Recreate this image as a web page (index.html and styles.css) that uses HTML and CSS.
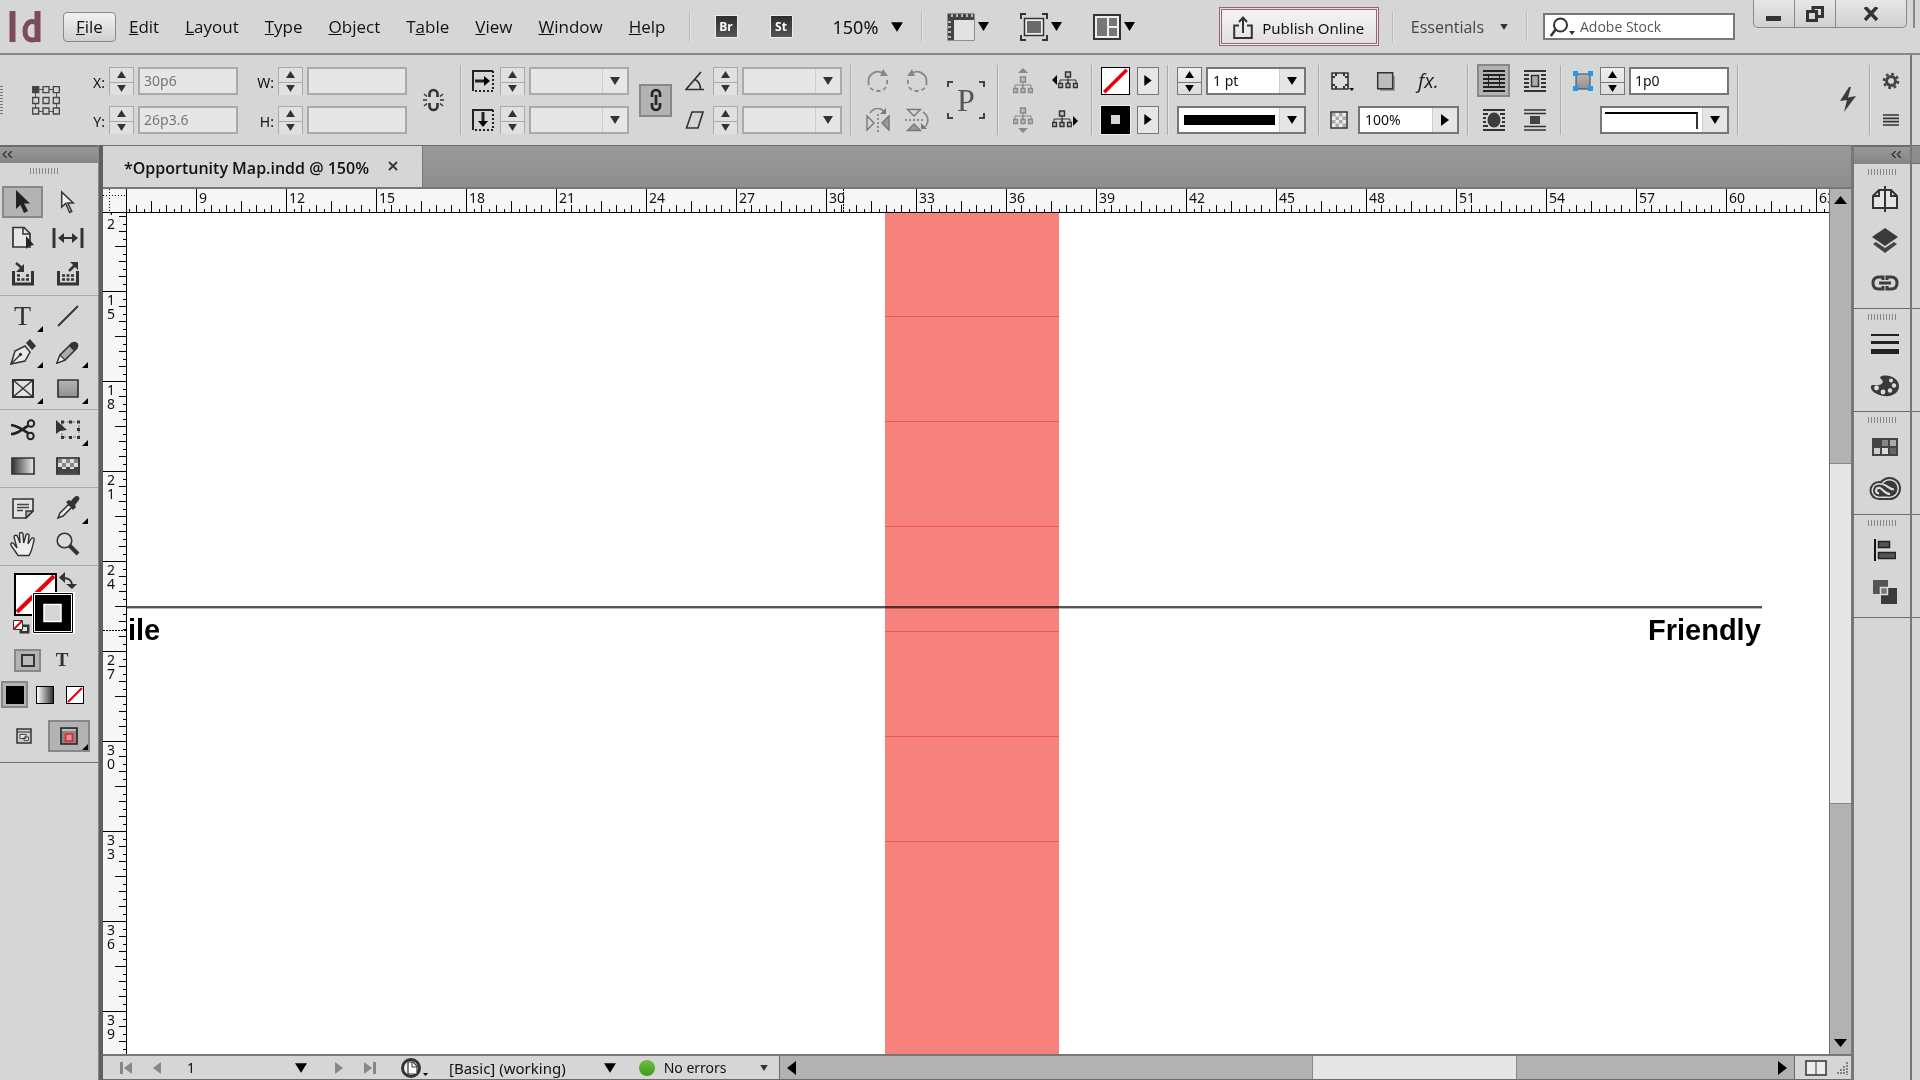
FILE: index.html
```html
<!DOCTYPE html>
<html lang="en">
<head>
<meta charset="utf-8">
<title>Opportunity Map.indd</title>
<link rel="stylesheet" href="styles.css">
</head>
<body>
<svg class="defs" aria-hidden="true">
  <defs>
    <linearGradient id="gray-ramp"><stop offset="0" stop-color="#333"/><stop offset="1" stop-color="#eee"/></linearGradient>
    <linearGradient id="soft" x2="0" y2="1"><stop offset="0" stop-color="#b5b5b5"/><stop offset="1" stop-color="#8f8f8f"/></linearGradient>
    <symbol id="up" viewBox="0 0 9 7"><path d="M4.500 0 9 7H0z"/></symbol>
    <symbol id="down" viewBox="0 0 10 8"><path d="M0 0h10L5 8z"/></symbol>
    <symbol id="right" viewBox="0 0 8 12"><path d="M0 0l8 6-8 6z"/></symbol>
    <symbol id="left" viewBox="0 0 8 12"><path d="M8 0v12L0 6z"/></symbol>
    <symbol id="flyout" viewBox="0 0 7 7"><path d="M7 0v7H0z"/></symbol>
    <symbol id="collapse" viewBox="0 0 12 8"><path d="M5 0 1 4l4 4M11 0 7 4l4 4" fill="none" stroke="#333" stroke-width="1.500"/></symbol>
    <symbol id="tree" viewBox="0 0 20 18"><path d="M10 5v7M2 13V9h16v4M10 9v4" fill="none" stroke="currentColor"/><path d="M7.500 1h5v5h-5zM.500 12.500h4v4h-4zM8 12.500h4v4H8zM15.500 12.500h4v4h-4z" fill="#bbb" stroke="currentColor" stroke-width="1.400"/></symbol>
    <symbol id="none" viewBox="0 0 30 30"><path d="M0 0h30v30H0z" fill="#fff"/><path d="M2 28 28 2" stroke="#e8000b" stroke-width="4"/></symbol>
  </defs>
</svg>
<div class="app">
  <header class="menubar">
    <svg class="logo" viewBox="0 0 34 32" role="img" aria-label="InDesign"><path d="M4.500 0v31M29.500 0v31" stroke="#7c4a5e" stroke-width="6"/><path d="M29 12c-2-1-3-1.500-5-1.500-4 0-7 4-7 9.500s2.500 9 7 9c2 0 3.500-.500 5-1" fill="none" stroke="#7c4a5e" stroke-width="5"/></svg>
    <nav class="menus">
      <button class="menu menu-open"><u>F</u>ile</button>
      <button class="menu"><u>E</u>dit</button>
      <button class="menu"><u>L</u>ayout</button>
      <button class="menu"><u>T</u>ype</button>
      <button class="menu"><u>O</u>bject</button>
      <button class="menu">T<u>a</u>ble</button>
      <button class="menu"><u>V</u>iew</button>
      <button class="menu"><u>W</u>indow</button>
      <button class="menu"><u>H</u>elp</button>
    </nav>
    <i class="bar-line"></i>
    <button class="app-tile">Br</button>
    <button class="app-tile">St</button>
    <button class="zoom-level">150% <svg class="caret-lg"><use href="#down"/></svg></button>
    <i class="bar-line"></i>
    <div class="view-options">
      <button class="view-option" aria-label="View options"><svg width="28" height="28" viewBox="0 0 28 28"><path d="M.500.500h27v27H.500z" fill="#444"/><path d="M7 7h20v20H7z" fill="#e2e2e2"/><path d="M5 1v3M10 1v3M15 1v3M20 1v3M25 1v3M1 9h3M1 14h3M1 19h3M1 24h3" stroke="#ddd" stroke-width="1.500"/></svg><svg class="caret"><use href="#down"/></svg></button>
      <button class="view-option" aria-label="Screen mode"><svg width="28" height="28" viewBox="0 0 28 28"><path d="M1 6V1h5M22 1h5v5M27 22v5h-5M6 27H1v-5" fill="none" stroke="#333" stroke-width="2"/><path d="M4.500 5.500h19v17h-19z" fill="#eee" stroke="#333" stroke-width="1.500"/><path d="M7 8h14v12H7z" fill="#6a6a6a"/></svg><svg class="caret"><use href="#down"/></svg></button>
      <button class="view-option" aria-label="Arrange documents"><svg width="28" height="28" viewBox="0 0 28 28"><path d="M1 2h26v24H1z" fill="#eee" stroke="#333" stroke-width="2"/><path d="M4 5h10v18H4zM16 5h8v8h-8zM16 15h8v8h-8z" fill="#777"/></svg><svg class="caret"><use href="#down"/></svg></button>
    </div>
    <span class="spacer"></span>
    <button class="publish"><svg width="20" height="24" viewBox="0 0 20 24"><path d="M6 9.500H1.200V22h17.600V9.500H14M10 17V2M6 6l4-4.500L14 6" fill="none" stroke="#333" stroke-width="2"/></svg>Publish Online</button>
    <i class="bar-line"></i>
    <button class="workspace-switch">Essentials <svg class="caret-sm"><use href="#down"/></svg></button>
    <i class="bar-line"></i>
    <label class="search"><svg width="26" height="20" viewBox="0 0 26 20"><circle cx="10.500" cy="8" r="6.500" fill="none" stroke="#333" stroke-width="2"/><path d="M6 12 .800 19" stroke="#333" stroke-width="2.500"/><path d="M19 14h6l-3 4z" fill="#333"/></svg><input type="search" placeholder="Adobe Stock" aria-label="Search Adobe Stock"></label>
    <div class="window-buttons">
      <button aria-label="Minimize"><svg width="16" height="16"><path d="M0 10h15v5H0z" fill="#333"/></svg></button>
      <button aria-label="Restore"><svg width="18" height="16" viewBox="0 0 18 16"><path d="M7 5V1.500h9.500v9H12M1.500 5.500h9v9h-9z" fill="none" stroke="#333" stroke-width="3"/></svg></button>
      <button class="close" aria-label="Close"><svg width="16" height="14" viewBox="0 0 16 14"><path d="M2 0l12 13M14 0 2 13" stroke="#333" stroke-width="3.500"/></svg></button>
    </div>
    <i class="window-edge"></i>
  </header>

  <div class="below-menu">
    <div class="frame">
      <section class="control-bar" aria-label="Control">
        <i class="side-grip"></i>
        <svg class="ref-point" width="28" height="29" viewBox="0 0 28 29"><path d="M3.500 3.500h21v22h-21z" fill="none" stroke="#555"/><g fill="#d6d6d6" stroke="#444" stroke-width="1.300"><path d="M.700.700h6v6h-6z" fill="#444"/><path d="M11 .700h6v6h-6zM21.300.700h6v6h-6zM.700 11.500h6v6h-6zM11 11.500h6v6h-6zM21.300 11.500h6v6h-6zM.700 22h6v6h-6zM11 22h6v6h-6zM21.300 22h6v6h-6z"/></g></svg>

        <div class="fields fields-x">
          <label for="x">X:</label>
          <span class="spin dim"><button><svg><use href="#up"/></svg></button><button><svg><use href="#down"/></svg></button></span>
          <input class="field dim" id="x" value="30p6">
          <label for="y">Y:</label>
          <span class="spin dim"><button><svg><use href="#up"/></svg></button><button><svg><use href="#down"/></svg></button></span>
          <input class="field dim" id="y" value="26p3.6">
        </div>
        <div class="fields fields-w">
          <label for="w">W:</label>
          <span class="spin dim"><button><svg><use href="#up"/></svg></button><button><svg><use href="#down"/></svg></button></span>
          <input class="field dim" id="w">
          <label for="h">H:</label>
          <span class="spin dim"><button><svg><use href="#up"/></svg></button><button><svg><use href="#down"/></svg></button></span>
          <input class="field dim" id="h">
        </div>
        <svg class="unlinked" width="21" height="24" viewBox="0 0 21 24"><path d="M6.500 9V6a4 4 0 0 1 8 0v3M6.500 15v3a4 4 0 0 0 8 0v-3" fill="none" stroke="#333" stroke-width="2.600"/><path d="M0 12h4M17 12h4M1 6l3 2.500M20 6l-3 2.500M1 18l3-2.500M20 18l-3-2.500" stroke="#333" stroke-width="1.500"/></svg>
        <i class="sep sep-wide"></i>

        <div class="fields fields-icon">
          <svg width="22" height="22" viewBox="0 0 22 22"><path d="M1 21V1h20" fill="none" stroke="#222" stroke-width="2"/><path d="M21 1v20H1" fill="none" stroke="#222" stroke-width="2" stroke-dasharray="2 2"/><path d="M3 11h10" stroke="#222" stroke-width="3"/><path d="M12 6l6 5-6 5z"/></svg>
          <span class="spin dim"><button><svg><use href="#up"/></svg></button><button><svg><use href="#down"/></svg></button></span>
          <span class="combo dim"><select aria-label="Scale X"><option></option></select><svg class="drop"><use href="#down"/></svg></span>
          <svg width="22" height="22" viewBox="0 0 22 22"><path d="M1 21V1h20" fill="none" stroke="#222" stroke-width="2"/><path d="M21 1v20H1" fill="none" stroke="#222" stroke-width="2" stroke-dasharray="2 2"/><path d="M11 3v10" stroke="#222" stroke-width="3"/><path d="M6 12l5 6 5-6z"/></svg>
          <span class="spin dim"><button><svg><use href="#up"/></svg></button><button><svg><use href="#down"/></svg></button></span>
          <span class="combo dim"><select aria-label="Scale Y"><option></option></select><svg class="drop"><use href="#down"/></svg></span>
        </div>
        <button class="pressed link-scale" aria-label="Constrain scaling"><svg width="12" height="24" viewBox="0 0 12 24"><path d="M2 9V6a4 4 0 0 1 8 0v3M2 15v3a4 4 0 0 0 8 0v-3M6 7v10" fill="none" stroke="#222" stroke-width="2.700"/></svg></button>
        <div class="fields fields-icon">
          <svg width="20" height="20" viewBox="0 0 20 20"><path d="M16 1 1 18.500h18M10 8.500c4 2 5.500 5.500 5.500 10" fill="none" stroke="#333" stroke-width="1.700"/></svg>
          <span class="spin dim"><button><svg><use href="#up"/></svg></button><button><svg><use href="#down"/></svg></button></span>
          <span class="combo dim"><select aria-label="Rotation"><option></option></select><svg class="drop"><use href="#down"/></svg></span>
          <svg width="20" height="18" viewBox="0 0 20 18"><path d="M7 1h11l-5 16H1.500z" fill="none" stroke="#333" stroke-width="1.600"/></svg>
          <span class="spin dim"><button><svg><use href="#up"/></svg></button><button><svg><use href="#down"/></svg></button></span>
          <span class="combo dim"><select aria-label="Shear"><option></option></select><svg class="drop"><use href="#down"/></svg></span>
        </div>
        <i class="sep"></i>

        <div class="icon-grid transforms">
          <svg width="22" height="24" viewBox="0 0 22 24"><path d="M1.500 13A9.500 9.500 0 0 1 17 5" fill="none" stroke="#888" stroke-width="1.800"/><path d="M16 0l5 7h-8z" fill="#888"/><path d="M20 11c1 7-3 11-9 11S1 18 1.500 13" fill="none" stroke="#888" stroke-width="1.800" stroke-dasharray="4 3"/></svg>
          <svg width="22" height="24" viewBox="0 0 22 24"><path d="M20.500 13A9.500 9.500 0 0 0 5 5" fill="none" stroke="#888" stroke-width="1.800"/><path d="M6 0 1 7h8z" fill="#888"/><path d="M2 11c-1 7 3 11 9 11s10-4 9.500-9" fill="none" stroke="#888" stroke-width="1.800" stroke-dasharray="4 3"/></svg>
          <svg width="24" height="24" viewBox="0 0 24 24"><path d="M12 6v18" stroke="#777" stroke-width="1.500" stroke-dasharray="2 2"/><path d="M1 8v14l7-7z" fill="none" stroke="#777" stroke-width="1.400"/><path d="M23 8v14l-7-7z" fill="#999" stroke="#777" stroke-width="1.400"/><path d="M4 5c4-6 11-6 14-1" fill="none" stroke="#888" stroke-width="1.700"/><path d="M20 0v6h-6z" fill="#777"/></svg>
          <svg width="24" height="24" viewBox="0 0 24 24"><path d="M0 12h18" stroke="#777" stroke-width="1.500" stroke-dasharray="2 2"/><path d="M2.500 1.500h13L9 8z" fill="none" stroke="#777" stroke-width="1.400"/><path d="M2.500 22.500h13L9 16z" fill="#999" stroke="#777" stroke-width="1.400"/><path d="M18 4c6 4 6 11 2 15" fill="none" stroke="#888" stroke-width="1.700"/><path d="M16 15v6h6z" fill="#777"/></svg>
        </div>
        <span class="glyph-p">P</span>
        <i class="sep sep-mid"></i>

        <div class="icon-grid selectors">
          <svg class="faded" width="22" height="26" viewBox="0 0 22 26"><path d="M11 0l5 5H6z" fill="currentColor"/><use href="#tree" x="1" y="8" width="20" height="18"/></svg>
          <svg width="28" height="20" viewBox="0 0 28 20"><path d="M6 4v10L1 9z"/><use href="#tree" x="7" y="0" width="20" height="18"/></svg>
          <svg class="faded" width="22" height="26" viewBox="0 0 22 26"><path d="M11 26l5-5H6z" fill="currentColor"/><use href="#tree" x="1" y="0" width="20" height="18"/></svg>
          <svg width="28" height="20" viewBox="0 0 28 20"><path d="M22 6v10l5-5z"/><use href="#tree" x="1" y="0" width="20" height="18"/></svg>
        </div>
        <i class="sep sep-mid"></i>

        <div class="swatches">
          <button class="swatch" aria-label="Fill"><svg><use href="#none"/></svg></button>
          <button class="arrow-button" aria-label="Fill options"><svg><use href="#right"/></svg></button>
          <button class="swatch swatch-stroke" aria-label="Stroke"><i></i></button>
          <button class="arrow-button" aria-label="Stroke options"><svg><use href="#right"/></svg></button>
        </div>
        <i class="sep"></i>

        <div class="fields stroke-fields">
          <span class="spin"><button><svg><use href="#up"/></svg></button><button><svg><use href="#down"/></svg></button></span>
          <span class="combo"><select aria-label="Stroke weight"><option>1 pt</option></select><svg class="drop"><use href="#down"/></svg></span>
          <button class="combo wide" aria-label="Stroke type"><i class="stroke-solid"></i><svg class="drop"><use href="#down"/></svg></button>
        </div>
        <i class="sep sep-mid"></i>

        <div class="effects">
          <div class="effects-row icons">
            <svg width="24" height="24" viewBox="0 0 24 24"><path d="M2 4h16v16H2z" fill="#dedede" stroke="#333" stroke-width="1.600"/><path d="M6 4v3M14 4v3M6 20v-3M14 20v-3M2 8h3M2 16h3M18 8h-3M18 16h-3" stroke="#333" stroke-width="2"/><path d="M19 19h5l-2 3z"/></svg>
            <svg width="24" height="24" viewBox="0 0 24 24"><path d="M6 7h15v15H6z" fill="#9a9a9a"/><path d="M3.700 3.700h15v16h-15z" fill="#bdbdbd" stroke="#333" stroke-width="1.500"/></svg>
            <span class="fx">fx.</span>
          </div>
          <div class="effects-row">
            <svg width="18" height="18" viewBox="0 0 18 18"><path d="M1 1h16v16H1z" fill="#eee" stroke="#333" stroke-width="1.500"/><path d="M2 2h3.500v3.500H2zM9 2h3.500v3.500H9zM5.500 5.500H9V9H5.500zM12.500 5.500H16V9h-3.500zM2 9h3.500v3.500H2zM9 9h3.500v3.500H9zM5.500 12.500H9V16H5.500zM12.500 12.500H16V16h-3.500z" fill="#aaa"/></svg>
            <span class="combo"><input value="100%" aria-label="Opacity"><svg class="drop drop-right"><use href="#right"/></svg></span>
          </div>
        </div>
        <i class="sep"></i>

        <div class="wraps">
          <button class="pressed" aria-label="No text wrap"><svg width="22" height="22" viewBox="0 0 22 22"><path d="M0 1h22M0 5h22M0 9h22M0 13h22M0 17h22M0 21h22" stroke="#222" stroke-width="2"/><path d="M5.500 4.500h11v13h-11z" fill="none" stroke="#222"/></svg></button>
          <button aria-label="Wrap around bounding box"><svg width="22" height="22" viewBox="0 0 22 22"><path d="M0 1h22M0 21h22M0 5h5M0 9h5M0 13h5M0 17h5M17 5h5M17 9h5M17 13h5M17 17h5" stroke="#333" stroke-width="2"/><path d="M7.500 5.500h7v11h-7z" fill="#aaa" stroke="#333" stroke-width="1.500"/></svg></button>
          <button aria-label="Wrap around object shape"><svg width="22" height="22" viewBox="0 0 22 22"><path d="M0 1h22M0 21h22M0 5h5M0 9h3M0 13h3M0 17h5M17 5h5M19 9h3M19 13h3M17 17h5" stroke="#333" stroke-width="2"/><ellipse cx="11" cy="11" rx="6.500" ry="7.500" fill="#3c3c3c"/></svg></button>
          <button aria-label="Jump object"><svg width="22" height="22" viewBox="0 0 22 22"><path d="M0 1h22M0 4.500h22M0 17.500h22M0 21h22" stroke="#333" stroke-width="1.700"/><path d="M6 7h10v8H6z" fill="#444"/></svg></button>
        </div>
        <i class="sep"></i>

        <div class="fields fields-icon corner-fields">
          <svg width="22" height="22" viewBox="0 0 22 22"><path d="M4 4h14v15H4z" fill="url(#soft)" stroke="#444"/><path d="M1 1h5v5H1zM16 1h5v5h-5zM1 16h5v5H1zM16 16h5v5h-5z" fill="#1a9cf0"/></svg>
          <span class="spin"><button><svg><use href="#up"/></svg></button><button><svg><use href="#down"/></svg></button></span>
          <input class="field" value="1p0" aria-label="Corner size">
          <button class="combo corner-shape" aria-label="Corner shape"><i class="corner-square"></i><svg class="drop"><use href="#down"/></svg></button>
        </div>
        <i class="sep"></i>
        <span class="spacer"></span>
        <svg width="18" height="26" viewBox="0 0 18 26"><path d="M10 0 1 14l7-1-3 12L17 9l-8 1.500L12 0z" fill="#3a3a3a"/></svg>
        <i class="sep sep-mid"></i>
        <div class="bar-menu">
          <svg width="18" height="18" viewBox="0 0 18 18"><circle cx="9" cy="9" r="4.500" fill="none" stroke="#444" stroke-width="3"/><circle cx="9" cy="9" r="7" fill="none" stroke="#444" stroke-width="2.500" stroke-dasharray="2.750 2.750"/></svg>
          <svg width="16" height="12" viewBox="0 0 16 12"><path d="M0 1h16M0 4.300h16M0 7.600h16M0 11h16" stroke="#333" stroke-width="1.700"/></svg>
        </div>
      </section>

      <div class="workspace">
        <aside class="tools" aria-label="Tools">
          <div class="panel-head"><svg class="chevrons"><use href="#collapse"/></svg></div>
          <i class="grip"></i>
          <div class="tool-group">
            <button class="tool active" aria-label="Selection"><svg width="16" height="24" viewBox="0 0 16 24"><path d="M1 0v19l4.500-4 3.500 8 4-2-4-7.500h6z" fill="#222"/></svg></button>
            <button class="tool" aria-label="Direct selection"><svg width="16" height="24" viewBox="0 0 16 24"><path d="M1.700 2v15l4-3.500 4 9 2-1-4-8.500h5.500z" fill="#eee" stroke="#333" stroke-width="1.500"/></svg></button>
            <button class="tool" aria-label="Page"><svg width="22" height="24" viewBox="0 0 22 24"><path d="M1 1.500h11l6 6V21H1z" fill="#e6e6e6" stroke="#333" stroke-width="1.700"/><path d="M11 2v6h7" fill="none" stroke="#333" stroke-width="1.500"/><path d="M14 10v13l3-3 5-1z" fill="#222"/></svg></button>
            <button class="tool" aria-label="Gap"><svg width="32" height="22" viewBox="0 0 32 22"><path d="M2 1v20M30 1v20" stroke="#333" stroke-width="3"/><path d="M8 11h16" stroke="#333" stroke-width="2"/><path d="M12 6v10l-6-5zM20 6v10l6-5z" fill="#333"/></svg></button>
            <button class="tool" aria-label="Content collector"><svg width="22" height="24" viewBox="0 0 22 24"><path d="M1.500 9v13h19V9" fill="none" stroke="#333" stroke-width="3"/><path d="M5 13.500h3M14 13.500h3M5 17.500h12" stroke="#333" stroke-width="2.500" stroke-dasharray="3 1.500"/><path d="M4 1l6 5" stroke="#333" stroke-width="2.500"/><path d="M12 2v8H4z" fill="#333"/></svg></button>
            <button class="tool" aria-label="Content placer"><svg width="22" height="24" viewBox="0 0 22 24"><path d="M1.500 9v13h19V9" fill="none" stroke="#333" stroke-width="3"/><path d="M5 13.500h12M5 17.500h12" stroke="#333" stroke-width="2.500" stroke-dasharray="3 1.500"/><path d="M12 9l6-6" stroke="#333" stroke-width="2.500"/><path d="M13 0h8v8z" fill="#333"/></svg></button>
          </div>
          <div class="tool-group">
            <button class="tool tool-type" aria-label="Type">T<svg class="more"><use href="#flyout"/></svg></button>
            <button class="tool" aria-label="Line"><svg width="22" height="22" viewBox="0 0 22 22"><path d="M1 21 21 1" stroke="#333" stroke-width="2"/></svg></button>
            <button class="tool" aria-label="Pen"><svg width="26" height="26" viewBox="0 0 26 26"><path d="M1 25 5 12l10-5 5 6-5 9z" fill="#e8e8e8" stroke="#333" stroke-width="1.500"/><path d="M1 25l9-9" stroke="#333" stroke-width="1.500"/><circle cx="10.500" cy="15.500" r="1.700" fill="#333"/><path d="M16 4l4-4 6 7-4 4z" fill="#333"/></svg><svg class="more"><use href="#flyout"/></svg></button>
            <button class="tool" aria-label="Pencil"><svg width="24" height="24" viewBox="0 0 24 24"><path d="M1 23l3-8L16 3l5 5L9 20z" fill="#aaa" stroke="#333" stroke-width="1.500"/><path d="M1 23l3-8 5 5z" fill="#eee" stroke="#333" stroke-width="1.200"/><path d="M16 3c2-3 8 0 6 4l-4 4-5-5z" fill="#333"/></svg><svg class="more"><use href="#flyout"/></svg></button>
            <button class="tool" aria-label="Rectangle frame"><svg width="22" height="19" viewBox="0 0 22 19"><path d="M1 1h20v17H1z" fill="#e2e2e2" stroke="#333" stroke-width="2"/><path d="M1 1l20 17M21 1 1 18" stroke="#333" stroke-width="1.400"/></svg><svg class="more"><use href="#flyout"/></svg></button>
            <button class="tool" aria-label="Rectangle"><svg width="22" height="19" viewBox="0 0 22 19"><path d="M1 1h20v17H1z" fill="url(#soft)" stroke="#333" stroke-width="1.700"/></svg><svg class="more"><use href="#flyout"/></svg></button>
          </div>
          <div class="tool-group">
            <button class="tool" aria-label="Scissors"><svg width="26" height="22" viewBox="0 0 26 22"><path d="M1 6c7 1 11 4 17 8M1 15c7 0 11-5 17-8" fill="none" stroke="#222" stroke-width="2.700"/><circle cx="21" cy="4.500" r="3.200" fill="none" stroke="#222" stroke-width="2"/><circle cx="20.500" cy="17" r="3.200" fill="none" stroke="#222" stroke-width="2"/></svg></button>
            <button class="tool" aria-label="Free transform"><svg width="26" height="22" viewBox="0 0 26 22"><path d="M7 3h17v15H7z" fill="none" stroke="#777" stroke-dasharray="3 2"/><path d="M6 1.500h3v3H6zM14 1.500h3v3h-3zM22 1.500h3v3h-3zM22 9h3v3h-3zM22 17h3v3h-3zM14 17h3v3h-3zM6 17h3v3H6zM1 1v14l4-3 7-1z" fill="#333"/></svg><svg class="more"><use href="#flyout"/></svg></button>
            <button class="tool" aria-label="Gradient swatch"><svg width="24" height="18" viewBox="0 0 24 18"><path d="M1 1h22v16H1z" fill="url(#gray-ramp)" stroke="#333" stroke-width="1.700"/></svg></button>
            <button class="tool" aria-label="Gradient feather"><svg width="24" height="18" viewBox="0 0 24 18"><path d="M1 1h22v16H1z" fill="#ddd" stroke="#222" stroke-width="1.700"/><path d="M2 2h4v4H2zM10 2h4v4h-4zM18 2h4v4h-4zM6 6h4v4H6zM14 6h4v4h-4z" fill="#888"/><path d="M2 10h4v6H2zM6 12h16v4H6zM10 10h4v3h-4zM18 10h4v3h-4z" fill="#444"/></svg></button>
          </div>
          <div class="tool-group">
            <button class="tool" aria-label="Note"><svg width="22" height="21" viewBox="0 0 22 21"><path d="M1 1h20v12l-7 7H1z" fill="#e2e2e2" stroke="#333" stroke-width="1.600"/><path d="M21 13h-7v7z" fill="#aaa" stroke="#333" stroke-width="1.400"/><path d="M5 6.500h12M5 9.500h12M5 12.500h6" stroke="#444" stroke-width="1.300"/></svg></button>
            <button class="tool" aria-label="Eyedropper"><svg width="24" height="24" viewBox="0 0 24 24"><path d="M2 22l2-5 9-9 3 3-9 9z" fill="#eee" stroke="#333" stroke-width="1.500"/><path d="M10 6l3-2 2 1c2-3 4-5 6-5s3 2 2 4l-4 5 1 2-3 3z" fill="#333"/></svg><svg class="more"><use href="#flyout"/></svg></button>
            <button class="tool" aria-label="Hand"><svg width="26" height="26" viewBox="0 0 26 26"><path d="M8 24.500C6 21 3 18 1 14c-1-2 2-3 3-1l3 4L4 6c0-2 3-2.500 3.500-.500L10 12l-.500-9c0-2 3-2 3.500 0l.700 9L16 4c.500-2 3.500-1 3 1l-1 8 3-5c1-2 4-1 3 1-1 5-2 11-5 15.500z" fill="#eee" stroke="#333" stroke-width="1.400"/></svg></button>
            <button class="tool" aria-label="Zoom"><svg width="24" height="24" viewBox="0 0 24 24"><path d="M13 13l9 9" stroke="#333" stroke-width="4"/><circle cx="8.500" cy="8.500" r="7.300" fill="#dcdcdc" stroke="#333" stroke-width="1.600"/></svg></button>
          </div>
          <div class="color-area">
            <svg width="64" height="64" viewBox="0 0 64 64"><path d="M2 2h41v41H2z" fill="#fff" stroke="#000" stroke-width="2"/><path d="M4 40 41 4" stroke="#e8000b" stroke-width="4"/><path d="M19 20h43v42H19z" fill="#fff"/><path d="M20.500 21.500h39v39h-39z" fill="#fff" stroke="#000"/><path d="M22 23h36v36H22z"/><path d="M31 32.500h17v17H31z" fill="#d6d6d6" stroke="#fff" stroke-width="1.500"/><path d="M50 6c6 0 9 2 9 8" fill="none" stroke="#333" stroke-width="2"/><path d="M52 0v11l-6-5.500zM53 12h11l-5 5z" fill="#333"/><path d="M6.500 52.500h10v9h-10z" fill="#333"/><path d="M9 55h5v4H9z" fill="#ddd"/><path d="M.500 48.500h9v9h-9z" fill="#fff" stroke="#333"/><path d="M1 57l8-8" stroke="#e8000b" stroke-width="2"/></svg>
          </div>
          <div class="format-row">
            <button class="pressed format-button" aria-label="Formatting affects container"><svg width="14" height="13"><path d="M1 1h12v11H1z" fill="#bbb" stroke="#333" stroke-width="2"/></svg></button>
            <button class="format-text" aria-label="Formatting affects text">T</button>
          </div>
          <div class="apply-row">
            <button class="pressed" aria-label="Apply color"><i class="chip chip-black"></i></button>
            <button aria-label="Apply gradient"><i class="chip chip-ramp"></i></button>
            <button aria-label="Apply none"><svg class="chip"><use href="#none"/></svg></button>
          </div>
          <div class="mode-row">
            <button class="mode" aria-label="Normal view"><svg width="16" height="16" viewBox="0 0 16 16"><path d="M1 1h14v14H1z" fill="#ccc" stroke="#333" stroke-width="1.500"/><path d="M1 4h14" stroke="#333"/><path d="M4 6.500h6v4H4zM8 9h4.500v3.500H8z" fill="#eee" stroke="#444"/></svg></button>
            <button class="mode pressed" aria-label="Preview"><svg width="18" height="18" viewBox="0 0 18 18"><path d="M1 1h16v16H1z" fill="#888" stroke="#222" stroke-width="1.600"/><path d="M2 3h14" stroke="#bbb" stroke-width="2"/><path d="M5.500 7h7v7h-7z" fill="#c99" stroke="#ee2020" stroke-width="1.700"/></svg><svg class="more"><use href="#flyout"/></svg></button>
          </div>
        </aside>

        <main class="document">
          <div class="tabs">
            <div class="tab"><span>*Opportunity Map.indd @ 150%</span><button aria-label="Close tab"><svg width="10" height="10" viewBox="0 0 10 10"><path d="M1 1l8 8M9 1 1 9" stroke="#333" stroke-width="1.800"/></svg></button></div>
          </div>
          <div class="sheet">
            <div class="ruler-corner"></div>
            <ol class="ruler ruler-top">
              <li>9</li><li>12</li><li>15</li><li>18</li><li>21</li><li>24</li><li>27</li><li>30</li><li>33</li><li>36</li><li>39</li><li>42</li><li>45</li><li>48</li><li>51</li><li>54</li><li>57</li><li>60</li><li>63</li>
            </ol>
            <ol class="ruler ruler-left">
              <li>12</li><li>15</li><li>18</li><li>21</li><li>24</li><li>27</li><li>30</li><li>33</li><li>36</li><li>39</li>
            </ol>
            <div class="canvas">
              <div class="axis"></div>
              <p class="axis-label axis-start">ile</p>
              <p class="axis-label axis-end">Friendly</p>
              <div class="grid-column"></div>
            </div>
            <div class="scroll-y">
              <svg width="13" height="8" viewBox="0 0 13 8"><path d="M6.500 0 13 8H0z"/></svg>
              <i class="thumb"></i>
              <svg width="13" height="8" viewBox="0 0 13 8"><path d="M0 0h13L6.500 8z"/></svg>
            </div>
          </div>
          <footer class="status">
            <div class="pager">
              <button aria-label="First page"><svg width="14" height="12" viewBox="0 0 14 12"><path d="M1.500 0v12" stroke="#888" stroke-width="3"/><path d="M12 0v12L4 6z" fill="#888"/></svg></button>
              <button aria-label="Previous page"><svg class="step"><use href="#left"/></svg></button>
              <select class="page-number" aria-label="Page"><option>1</option></select>
              <svg class="caret-lg"><use href="#down"/></svg>
              <button class="next" aria-label="Next page"><svg class="step"><use href="#right"/></svg></button>
              <button aria-label="Last page"><svg width="14" height="12" viewBox="0 0 14 12"><path d="M12.500 0v12" stroke="#888" stroke-width="3"/><path d="M2 0v12l8-6z" fill="#888"/></svg></button>
            </div>
            <svg class="preflight" width="28" height="20" viewBox="0 0 28 20"><circle cx="10" cy="10" r="8.500" fill="#eee" stroke="#333" stroke-width="3"/><path d="M7 4h5l4 4v8H7z" fill="#fff" stroke="#333" stroke-width="1.200"/><path d="M11 4v5h5" fill="none" stroke="#333"/><path d="M22 15h5l-2.500 3z"/></svg>
            <button class="profile">[Basic] (working) <svg class="caret-lg"><use href="#down"/></svg></button>
            <button class="errors"><i class="ok"></i>No errors <svg class="caret-sm"><use href="#down"/></svg></button>
            <div class="scroll-x">
              <svg width="9" height="14" viewBox="0 0 9 14"><path d="M9 0v14L0 7z"/></svg>
              <i class="thumb"></i>
              <svg width="9" height="14" viewBox="0 0 9 14"><path d="M0 0v14l9-7z"/></svg>
            </div>
            <button class="split" aria-label="Split layout view"><svg width="22" height="16" viewBox="0 0 22 16"><path d="M1 1h20v14H1z" fill="#eee" stroke="#333" stroke-width="1.500"/><path d="M11 1v14" stroke="#333"/></svg></button>
            <svg class="resize" width="14" height="14" viewBox="0 0 14 14"><path d="M12 1v13M9 5v9M6 8v6M3 11v3" stroke="#666" stroke-width="1.500" stroke-dasharray="2 1"/></svg>
          </footer>
        </main>

        <aside class="dock" aria-label="Panels">
          <div class="panel-head"><svg class="chevrons"><use href="#collapse"/></svg></div>
          <div class="dock-group">
            <i class="grip"></i>
            <button aria-label="Pages"><svg width="26" height="26" viewBox="0 0 26 26"><path d="M7 4h12l6 6v12H1V10z" fill="#e4e4e4" stroke="#333" stroke-width="2"/><path d="M13 0v26M7 4v6H1M19 4v6h6" fill="none" stroke="#333" stroke-width="2"/></svg></button>
            <button aria-label="Layers"><svg width="26" height="26" viewBox="0 0 26 26"><path d="M13 0l13 9-13 9L0 9z" fill="#3a3a3a"/><path d="M1 16l3-2 9 6 9-6 3 2-12 9z" fill="#444"/></svg></button>
            <button aria-label="Links"><svg width="28" height="16" viewBox="0 0 28 16"><path d="M12 5V2H8C4 2 2 4 2 8s2 6 6 6h4v-3M16 5V2h4c4 0 6 2 6 6s-2 6-6 6h-4v-3M8 8h12" fill="none" stroke="#3d3d3d" stroke-width="3"/></svg></button>
          </div>
          <div class="dock-group">
            <i class="grip"></i>
            <button aria-label="Stroke"><svg width="28" height="20" viewBox="0 0 28 20"><path d="M0 0h28v2H0zM0 7h28v3H0zM0 15h28v5H0z" fill="#222"/></svg></button>
            <button aria-label="Color"><svg width="30" height="22" viewBox="0 0 30 22"><path d="M12 1c8-2 17 3 17 10s-7 11-15 10S0 16 1 11c1-2 5 0 8-1s5-3 3-5-3-3 0-4z" fill="#3a3a3a"/><g fill="#ddd"><circle cx="21" cy="5.500" r="2"/><circle cx="24" cy="10.500" r="2.200"/><circle cx="20" cy="15.500" r="2.200"/><circle cx="13" cy="17" r="2.400"/><circle cx="6.500" cy="13" r="2.400"/></g></svg></button>
          </div>
          <div class="dock-group">
            <i class="grip"></i>
            <button aria-label="Swatches"><svg width="26" height="18" viewBox="0 0 26 18"><path d="M0 0h26v18H0z" fill="#444"/><path d="M10 2h6v6h-6z" fill="#888"/><path d="M18 2h6v6h-6z" fill="#aaa"/><path d="M2 10h6v6H2z" fill="#ccc"/><path d="M10 10h6v6h-6z" fill="#ddd"/><path d="M18 10h6v6h-6z" fill="#666"/></svg></button>
            <button aria-label="CC Libraries"><svg width="32" height="24" viewBox="0 0 32 24"><g fill="#3a3a3a"><circle cx="10" cy="13.500" r="9.500"/><circle cx="20.500" cy="11.500" r="11.500"/><path d="M10 14h11v9H10z"/></g><g fill="#ddd"><circle cx="10" cy="13.500" r="7.500"/><circle cx="20.500" cy="11.500" r="9.500"/><path d="M10 14h11v7H10z"/></g><g fill="#3a3a3a"><circle cx="10" cy="13.500" r="6"/><circle cx="20.500" cy="11.500" r="8"/><path d="M10 13h11v6.500H10z"/></g><path d="M10 16.500c-5-1-3-6.500 1-5.500 3 1 5 6 10 6M14 7.500c4 0 6 5 11 5" fill="none" stroke="#ddd" stroke-width="2.200"/></svg></button>
          </div>
          <div class="dock-group">
            <i class="grip"></i>
            <button aria-label="Align"><svg width="22" height="22" viewBox="0 0 22 22"><path d="M1 0v22" stroke="#111" stroke-width="2"/><path d="M4.500 2.500h11v6h-11zM4.500 13.500h17v6h-17z" fill="#555" stroke="#222" stroke-width="1.500"/></svg></button>
            <button aria-label="Pathfinder"><svg width="24" height="24" viewBox="0 0 24 24"><path d="M0 0h15v14H0z" fill="#555"/><path d="M8 8h16v16H8z" fill="#3a3a3a"/><path d="M7.500 7.500h7v7h-7z" fill="#777" stroke="#ddd" stroke-width="1.500"/></svg></button>
          </div>
        </aside>
      </div>
    </div>
    <div class="edge-strip" aria-hidden="true">
      <i class="edge-control"></i><i class="edge-head"></i><i class="edge-tall"></i><i class="edge-group"></i><i class="edge-group"></i><i class="edge-group"></i>
    </div>
  </div>
</div>
</body>
</html>
```
FILE: styles.css
```css
* { box-sizing: border-box; }

:root {
  --chrome: #d6d6d6;
  --line: #6c6c6c;
  --soft-line: #aaa;
  --track: #b2b2b2;
  --ui: "Open Sans", "Noto Sans", sans-serif;
  --narrow: "Noto Sans", "DejaVu Sans Condensed", sans-serif;
}

body { margin: 0; font: 14px/20px var(--narrow); color: #111; background: var(--chrome); }
button, input, select { font: inherit; color: inherit; margin: 0; padding: 0; border: 0; background: none; }
button { display: flex; align-items: center; justify-content: center; }
select { appearance: none; }
svg { display: block; flex: none; }
ol, p { margin: 0; padding: 0; list-style: none; }
i { display: block; flex: none; }
.defs { position: absolute; width: 0; height: 0; }
.spacer { flex: 1; }

.app { display: flex; flex-direction: column; height: 100vh; overflow: hidden; }

/* Menu bar */
.menubar { display: flex; align-items: center; flex: none; height: 55px; padding-left: 8px; border-bottom: 2px solid #888; }
.logo { width: 34px; height: 32px; margin-right: 21px; }
.menus { display: flex; }
.menu { height: 30px; padding: 0 13px; font: 17px/28px var(--ui); }
.menu-open { padding: 0 12px; border: 1px solid #888; border-radius: 4px; background: linear-gradient(#f2f2f2, #d0d0d0); }
.bar-line { width: 2px; height: 30px; background: linear-gradient(to right, #bbb 1px, #e4e4e4 1px); }
.menus + .bar-line { margin: 0 24px 0 10px; }
.app-tile { width: 23px; height: 23px; margin-right: 32px; border: 1px solid #eee; background: linear-gradient(#2e2e2e, #555); color: #fff; font: bold 12px/20px var(--ui); }
.zoom-level { margin-left: 8px; margin-right: 18px; gap: 13px; font-size: 18px; }
.caret-lg { width: 12px; height: 10px; }
.caret { width: 11px; height: 9px; }
.caret-sm { width: 8px; height: 6px; fill: #333; }
.view-options { display: flex; gap: 31px; margin-left: 24px; }
.view-option { gap: 3px; }
.publish { width: 160px; height: 39px; gap: 9px; padding-top: 2px; border: 3px double #97637a; background: linear-gradient(#f4f4f4, #e0e0e0); font-size: 15px; }
.publish + .bar-line { margin: 0 17px 0 13px; }
.workspace-switch { gap: 16px; font-family: var(--ui); font-size: 16px; color: #444; }
.workspace-switch + .bar-line { margin: 0 15px 0 18px; }
.search { display: flex; align-items: center; width: 192px; height: 27px; padding: 0 5px; border: 2px solid #777; background: #fff; }
.search input { min-width: 0; flex: 1; margin-left: 4px; outline: 0; font: 14px/20px var(--ui); }
.search input::placeholder { color: #555; opacity: 1; }
.window-buttons { display: flex; align-self: flex-start; height: 28px; margin: 0 6px 0 18px; border: 1px solid #888; border-top: 0; border-radius: 0 0 5px 5px; background: linear-gradient(#e6e6e6, #d0d0d0); }
.window-buttons button { width: 41px; border-right: 1px solid #888; }
.window-buttons .close { width: 70px; border: 0; }
.window-edge { align-self: flex-start; width: 2px; height: 28px; margin-right: 5px; background: #888; }

.below-menu { display: flex; flex: 1; min-height: 0; }
.frame { display: flex; flex-direction: column; flex: 1; min-width: 0; }

/* Control bar */
.control-bar { display: flex; align-items: center; flex: none; height: 90px; padding-right: 9px; }
.control-bar > * { flex: none; }
.control-bar > .spacer { flex: 1; }
.side-grip { width: 3px; height: 28px; background: repeating-linear-gradient(#777 0 1px, transparent 1px 3px); }
.ref-point { margin: 0 27px 0 29px; }
.sep { width: 2px; height: 70px; margin: 0 8px; background: linear-gradient(to right, #aaa 1px, #e2e2e2 1px); }
.sep-mid { margin: 0 10px 0 12px; }
.sep-wide { margin: 0 10px 0 16px; }
.fields { display: grid; grid-template: 28px 28px / 18px 25px 100px; gap: 11px 4px; align-items: center; }
.fields label { display: flex; justify-content: flex-end; padding-top: 4px; }
.fields-w { margin: 0 16px 0 18px; }
.fields-icon { grid-template-columns: 24px 25px 100px; }
.spin { display: grid; grid-template-rows: 14px 14px; border: 1px solid #777; background: linear-gradient(#eee, #ddd); height: 28px; }
.spin button + button { border-top: 1px solid #777; height: 13px; }
.spin button { height: 14px; }
.spin svg { width: 9px; height: 7px; }
.spin.dim, .spin.dim button { border-color: var(--soft-line); background: #e0e0e0; fill: #333; }
.field { width: 100%; height: 28px; padding: 0 4px; border: 2px solid #777; background: #fff; }
.combo { display: flex; align-items: stretch; width: 100%; min-width: 0; height: 28px; border: 2px solid #777; background: #fff; }
.combo select, .combo input, .combo > i { flex: 1; min-width: 0; padding-left: 5px; }
.field.dim, .combo.dim { border-color: var(--soft-line); background: #e6e6e6; color: #777; }
.drop { width: 25px; height: 24px; padding: 8px 7px; border-left: 1px solid #ccc; background: #e6e6e6; }
.drop-right { padding: 6px 8px; }
.combo.dim .drop { background: none; fill: #333; }
.pressed { border: 2px solid #888; background: #b3b3b3; }
.link-scale { width: 33px; height: 33px; margin: 0 13px 0 10px; }
.icon-grid { display: grid; grid-template-rows: 28px 28px; row-gap: 11px; place-items: center; }
.transforms { grid-template-columns: 24px 24px; column-gap: 15px; margin: 0 18px 0 6px; }
.selectors { grid-template-columns: 24px 28px; column-gap: 16px; margin-left: 2px; color: #333; }
.faded { color: #888; }
.glyph-p { display: flex; align-items: center; justify-content: center; width: 38px; height: 38px; color: #555; font: 32px/38px "Liberation Serif", serif;
  background: linear-gradient(#444, #444) 0 0/6px 2px, linear-gradient(#444, #444) 0 0/2px 6px, linear-gradient(#444, #444) 100% 0/6px 2px, linear-gradient(#444, #444) 100% 0/2px 6px, linear-gradient(#444, #444) 0 100%/6px 2px, linear-gradient(#444, #444) 0 100%/2px 6px, linear-gradient(#444, #444) 100% 100%/6px 2px, linear-gradient(#444, #444) 100% 100%/2px 6px;
  background-repeat: no-repeat; }
.swatches { display: grid; grid-template: 28px 28px / 29px 22px; gap: 11px 7px; margin-left: -2px; }
.swatch { width: 29px; height: 28px; border: 1px solid #000; background: #fff; }
.swatch svg { width: 27px; height: 26px; }
.swatch-stroke { background: #000; outline: 1px solid #eee; }
.swatch-stroke i { width: 9px; height: 9px; background: var(--chrome); }
.arrow-button { border: 1px solid #777; background: #e6e6e6; }
.arrow-button svg { width: 8px; height: 11px; }
.stroke-fields { grid-template-columns: 25px 100px; }
.wide { grid-column: 1 / -1; }
.combo > .stroke-solid { margin: 7px 4px 7px 5px; background: #000; }
.effects { display: grid; gap: 11px; }
.effects-row { display: flex; align-items: center; gap: 10px; width: 129px; height: 28px; }
.icons { gap: 20px; }
.fx { width: 24px; white-space: nowrap; font: italic 20px/24px var(--ui); color: #222; }
.wraps { display: grid; grid-template: 28px 28px / 33px 33px; gap: 11px 8px; align-items: center; margin-right: 1px; }
.wraps .pressed { height: 33px; }
.corner-fields { margin-left: 2px; }
.corner-shape { grid-column: 2 / -1; }
.combo > .corner-square { margin: 4px 4px 3px 3px; border-top: 2px solid #000; border-right: 2px solid #333; }
.bar-menu { display: grid; grid-template-rows: 28px 28px; gap: 11px; place-items: center; width: 20px; }

/* Workspace */
.workspace { display: flex; flex: 1; min-height: 0; }
.panel-head { display: flex; align-items: center; height: 18px; padding: 0 2px 2px; border-top: 2px solid var(--line); background: linear-gradient(#999, #858585); }
.chevrons { width: 11px; height: 7px; }
.grip { width: 28px; height: 6px; background: repeating-linear-gradient(to right, #888 0 1px, transparent 1px 3px); }

.tools { flex: none; width: 99px; border-right: 1px solid #888; }
.tools > .grip { margin: 5px 0 10px 30px; }
.tool-group { display: grid; grid-template-columns: 45px 45px; grid-auto-rows: 36px; padding-bottom: 3px; margin-bottom: 2px; border-bottom: 1px solid #aaa; }
.tool { position: relative; width: 41px; height: 32px; margin: 2px; }
.tool.active { border: 2px solid #888; background: #b3b3b3; }
.more { position: absolute; right: 0; bottom: 0; width: 6px; height: 6px; }
.tool-type { font: 28px/32px "Liberation Serif", serif; color: #333; }
.color-area { padding: 4px 0 0 13px; height: 78px; }
.format-row { display: flex; align-items: center; gap: 11px; height: 28px; padding-left: 14px; }
.format-button { width: 27px; height: 23px; }
.format-text { width: 20px; font: bold 19px/20px "Liberation Serif", serif; color: #333; }
.apply-row { display: flex; gap: 3px; padding: 7px 1px 6px; }
.apply-row button { width: 27px; height: 27px; }
.chip { width: 18px; height: 18px; border: 1px solid #000; }
.chip-black { background: #000; }
.chip-ramp { background: linear-gradient(to right, #fff, #333); }
.mode-row { display: flex; gap: 3px; padding: 6px 0 10px 3px; border-bottom: 1px solid var(--line); }
.mode { position: relative; width: 42px; height: 32px; }

.document { display: flex; flex-direction: column; flex: 1; min-width: 0; border-left: 4px solid #606060; border-right: 3px solid #777; }
.tabs { display: flex; flex: none; height: 44px; border-top: 1px solid var(--line); border-bottom: 2px solid #777; background: linear-gradient(#999, #8e8e8e); }
.tab { display: flex; align-items: center; justify-content: space-between; width: 320px; padding: 3px 24px 0 21px; border-right: 1px solid #777; background: var(--chrome); font: 600 16px/20px var(--ui); white-space: nowrap; }
.tab button { margin-bottom: 4px; }
.sheet { display: grid; grid-template: 24px 1fr / 24px 1fr 22px; flex: 1; min-height: 0; }
.ruler-corner { grid-area: 1 / 1; border-right: 1px solid #000; border-bottom: 1px solid #000; background: linear-gradient(to right, #000 1px, transparent 1px) 0 6px/3px 1px repeat-x, linear-gradient(#000 1px, transparent 1px) 6px 0/1px 3px repeat-y, #f6f6f6; }
.ruler { display: flex; overflow: hidden; font-size: 14px; line-height: 14px; background-color: #f6f6f6; }
.ruler li { flex: none; }
.ruler-top { grid-area: 1 / 2; padding-left: 69px; border-bottom: 1px solid #000;
  background-image: repeating-linear-gradient(#000 0 2px, transparent 2px 3px), linear-gradient(to right, #000 1px, transparent 1px), linear-gradient(to right, #000 1px, transparent 1px), linear-gradient(to right, #000 1px, transparent 1px), linear-gradient(to right, #000 1px, transparent 1px);
  background-size: 1px 24px, 90px 24px, 45px 11px, 15px 7px, 15px 3px;
  background-position: 716px 0, 69px 0, 24px 100%, 9px 100%, 2px 100%;
  background-repeat: no-repeat, repeat-x, repeat-x, repeat-x, repeat-x; }
.ruler-top li { width: 90px; padding: 2px 0 0 3px; }
.ruler-left { grid-area: 2 / 1; flex-direction: column; border-right: 1px solid #000;
  background-image: repeating-linear-gradient(to right, #000 0 2px, transparent 2px 3px), linear-gradient(#000 1px, transparent 1px), linear-gradient(#000 1px, transparent 1px), linear-gradient(#000 1px, transparent 1px), linear-gradient(#000 1px, transparent 1px);
  background-size: 24px 1px, 24px 90px, 11px 45px, 7px 15px, 3px 15px;
  background-position: 0 417px, 0 78px, 100% 33px, 100% 3px, 100% 11px;
  background-repeat: no-repeat, repeat-y, repeat-y, repeat-y, repeat-y; }
.ruler-left li { height: 90px; width: 12px; padding: 2px 0 0 4px; word-break: break-all; }
.ruler-left li:first-child { margin-top: -12px; }
.canvas { grid-area: 2 / 2; position: relative; overflow: hidden; background: #fff; }
.axis { position: absolute; left: 0; top: 393px; width: 1635px; height: 3px; border-bottom: 1px solid #bbb; background: #555; }
.axis-label { position: absolute; top: 400px; font: bold 29px/34px "Liberation Sans", sans-serif; color: #000; }
.axis-start { left: 1px; }
.axis-end { left: 1521px; }
.grid-column { position: absolute; left: 758px; top: 0; bottom: 0; width: 174px; mix-blend-mode: multiply;
  background: repeating-linear-gradient(transparent 0 103px, #e85754 103px 104px, transparent 104px 105px) 0 0/100% 630px no-repeat, #f7827d; }
.scroll-y { grid-column: 3; grid-row: 1 / 3; display: flex; flex-direction: column; align-items: center; justify-content: space-between; padding: 7px 0; border-left: 1px solid var(--line); background: var(--track); }
.scroll-y .thumb { width: 100%; height: 341px; margin-top: 23px; border: solid #888; border-width: 1px 0; background: #e6e6e6; }

/* Status bar */
.status { display: flex; align-items: center; flex: none; height: 26px; border-top: 2px solid #777; border-bottom: 1px solid var(--line); white-space: nowrap; }
.pager { display: flex; align-items: center; margin-left: 17px; }
.pager > button + button { margin-left: 19px; }
.step { width: 8px; height: 12px; fill: #888; }
.page-number { width: 108px; margin-left: 26px; }
.pager .next { margin-left: 28px; }
.preflight { margin: 0 20px 0 25px; }
.profile { gap: 38px; font-size: 15px; }
.errors { gap: 9px; margin-left: 23px; }
.errors .caret-sm { margin-left: 24px; }
.ok { width: 16px; height: 16px; border-radius: 8px; background: linear-gradient(#6cc03a, #3f9a20); }
.scroll-x { display: flex; align-items: center; justify-content: space-between; flex: 1; align-self: stretch; margin-left: 11px; padding: 0 7px; border: solid var(--line); border-width: 0 1px; background: var(--track); }
.scroll-x .thumb { width: 205px; height: 100%; margin-left: 256px; border: solid #888; border-width: 0 1px; background: #e6e6e6; }
.split { margin: 0 8px 0 10px; }
.resize { margin-right: 2px; }

/* Panel dock */
.dock { flex: none; width: 56px; }
.dock .panel-head { justify-content: flex-end; height: 19px; padding-right: 8px; }
.dock-group { padding: 5px 0 4px; border-bottom: 1px solid var(--line); }
.dock-group .grip { margin: 0 0 3px 14px; }
.dock-group button { width: 100%; height: 42px; padding-left: 5px; }

.edge-strip { flex: none; width: 10px; border-left: 2px solid #777; }
.edge-control { height: 90px; }
.edge-head { height: 19px; border: solid var(--line); border-width: 1px 0; background: #8e8e8e; }
.edge-tall { height: 145px; border-bottom: 1px solid var(--line); }
.edge-group { height: 103px; border-bottom: 1px solid var(--line); }
```
